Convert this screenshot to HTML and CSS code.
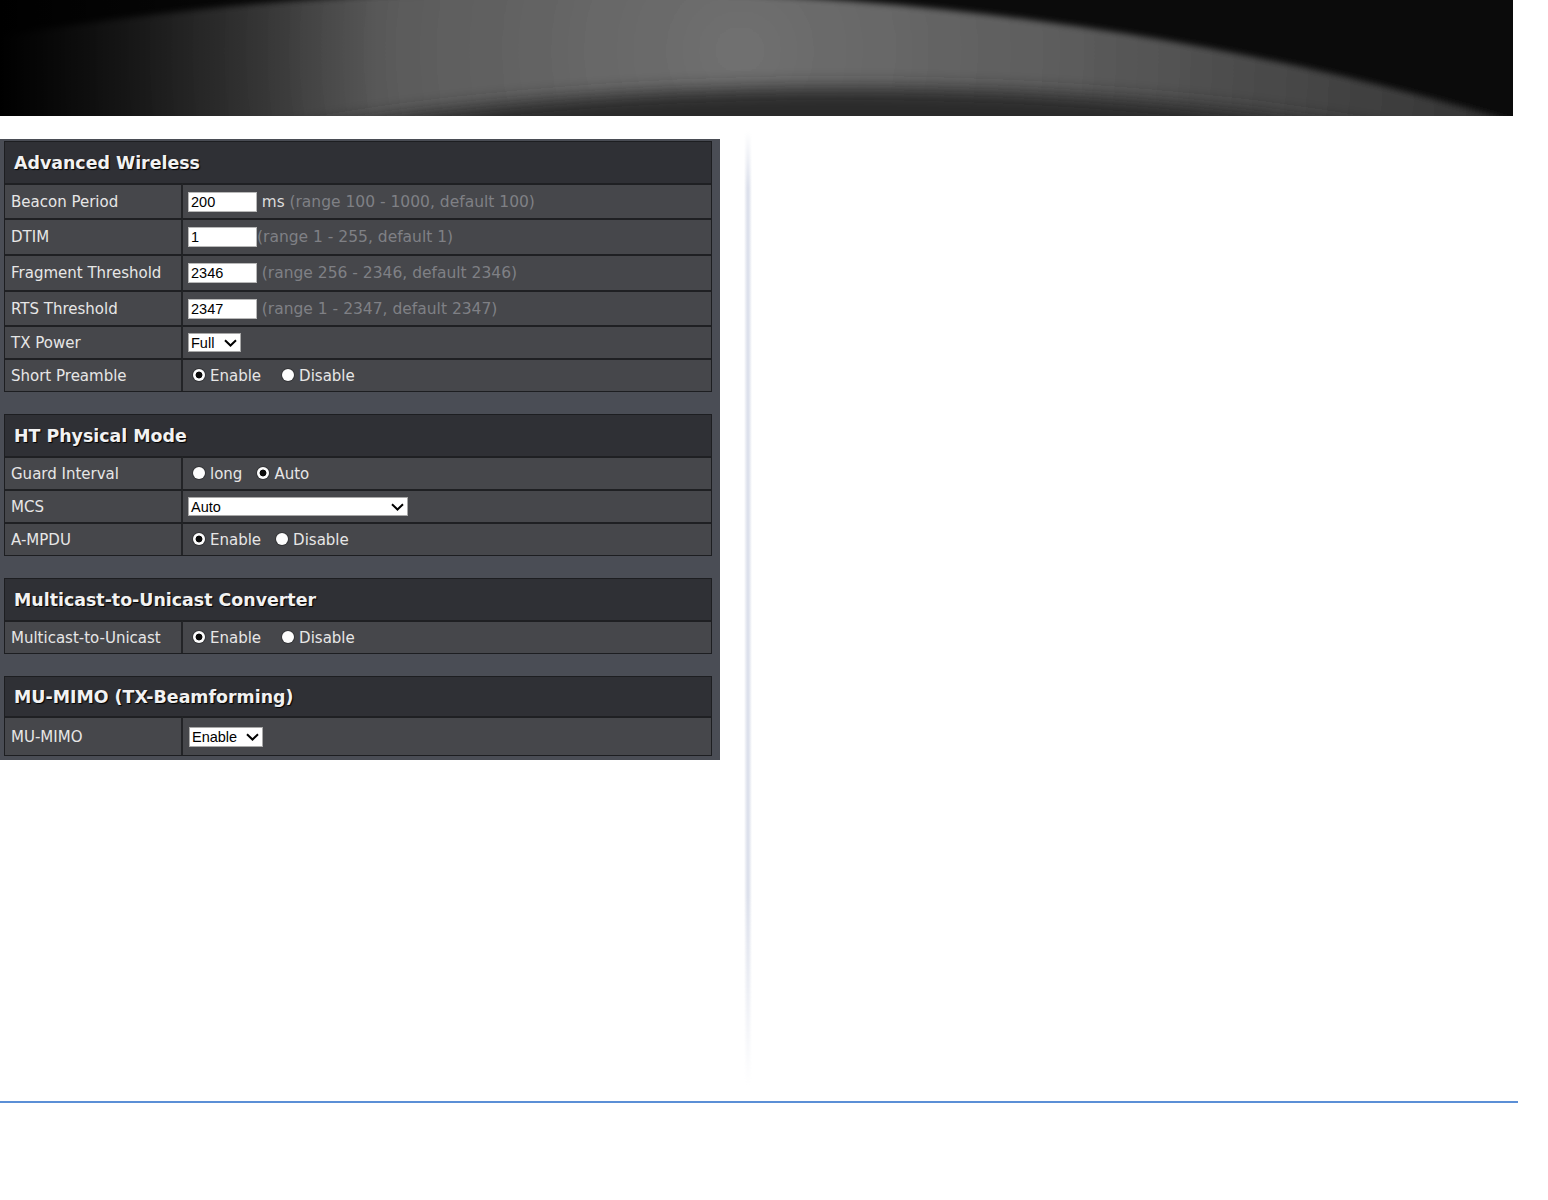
FILE: index.html
```html
<!DOCTYPE html>
<html>
<head>
<meta charset="utf-8">
<title>Advanced Wireless</title>
<link rel="stylesheet" href="styles.css">
</head>
<body>
<div class="banner">
  <svg width="1513" height="116" viewBox="0 0 1513 116">
    <defs>
      <radialGradient id="g1" cx="740" cy="50" r="820" gradientUnits="userSpaceOnUse">
        <stop offset="0" stop-color="#707070"/>
        <stop offset="0.4" stop-color="#5c5c5c"/>
        <stop offset="1" stop-color="#2e2e2e"/>
      </radialGradient>
      <linearGradient id="lf" x1="0" y1="0" x2="1" y2="0">
        <stop offset="0" stop-color="#000" stop-opacity="1"/>
        <stop offset="0.25" stop-color="#000" stop-opacity="0"/>
      </linearGradient>
      <filter id="b1" x="-5%" y="-5%" width="110%" height="110%"><feGaussianBlur stdDeviation="3"/></filter>
      <filter id="b2" x="-20%" y="-20%" width="140%" height="140%"><feGaussianBlur stdDeviation="9"/></filter>
    </defs>
    <rect width="1513" height="116" fill="#0b0b0b"/>
    <ellipse cx="571" cy="990" rx="1900" ry="1000" fill="url(#g1)" filter="url(#b1)"/>
    <ellipse cx="840" cy="388" rx="1050" ry="300" fill="#2a2a2a" filter="url(#b2)"/>
    <rect width="1513" height="116" fill="url(#lf)"/>
  </svg>
</div>
<div class="main">
  <div class="panel">
    <table class="tbl">
      <colgroup><col class="c1"><col class="c2"></colgroup>
      <tr class="head"><th colspan="2">Advanced Wireless</th></tr>
      <tr class="r35"><td class="lbl">Beacon Period</td><td class="val"><input class="txt" type="text" value="200"> <span class="unit">ms</span> <span class="hint">(range 100 - 1000, default 100)</span></td></tr>
      <tr class="r36"><td class="lbl">DTIM</td><td class="val"><input class="txt" type="text" value="1"><span class="hint">(range 1 - 255, default 1)</span></td></tr>
      <tr class="r36"><td class="lbl">Fragment Threshold</td><td class="val"><input class="txt" type="text" value="2346"> <span class="hint">(range 256 - 2346, default 2346)</span></td></tr>
      <tr class="r35"><td class="lbl">RTS Threshold</td><td class="val"><input class="txt" type="text" value="2347"> <span class="hint">(range 1 - 2347, default 2347)</span></td></tr>
      <tr><td class="lbl">TX Power</td><td class="val"><span class="select s-full"><span>Full</span><svg width="13" height="8" viewBox="0 0 13 8"><path d="M1 1.2 L6.5 6.5 L12 1.2" fill="none" stroke="#000" stroke-width="2"/></svg></span></td></tr>
      <tr><td class="lbl">Short Preamble</td><td class="val"><input class="radio" type="radio" name="sp" checked><span class="opt">Enable</span><input class="radio gap-wide" type="radio" name="sp"><span class="opt">Disable</span></td></tr>
    </table>

    <table class="tbl">
      <colgroup><col class="c1"><col class="c2"></colgroup>
      <tr class="head"><th colspan="2">HT Physical Mode</th></tr>
      <tr><td class="lbl">Guard Interval</td><td class="val"><input class="radio" type="radio" name="gi"><span class="opt">long</span><input class="radio gap" type="radio" name="gi" checked><span class="opt">Auto</span></td></tr>
      <tr><td class="lbl">MCS</td><td class="val"><span class="select s-mcs"><span>Auto</span><svg width="13" height="8" viewBox="0 0 13 8"><path d="M1 1.2 L6.5 6.5 L12 1.2" fill="none" stroke="#000" stroke-width="2"/></svg></span></td></tr>
      <tr><td class="lbl">A-MPDU</td><td class="val"><input class="radio" type="radio" name="am" checked><span class="opt">Enable</span><input class="radio gap" type="radio" name="am"><span class="opt">Disable</span></td></tr>
    </table>

    <table class="tbl">
      <colgroup><col class="c1"><col class="c2"></colgroup>
      <tr class="head"><th colspan="2">Multicast-to-Unicast Converter</th></tr>
      <tr><td class="lbl">Multicast-to-Unicast</td><td class="val"><input class="radio" type="radio" name="mu" checked><span class="opt">Enable</span><input class="radio gap-wide" type="radio" name="mu"><span class="opt">Disable</span></td></tr>
    </table>

    <table class="tbl">
      <colgroup><col class="c1"><col class="c2"></colgroup>
      <tr class="head short"><th colspan="2">MU-MIMO (TX-Beamforming)</th></tr>
      <tr class="big"><td class="lbl">MU-MIMO</td><td class="val"><span class="select s-mimo"><span>Enable</span><svg width="13" height="8" viewBox="0 0 13 8"><path d="M1 1.2 L6.5 6.5 L12 1.2" fill="none" stroke="#000" stroke-width="2"/></svg></span></td></tr>
    </table>
  </div>
  <div class="divider"></div>
</div>
<div class="rule"></div>
</body>
</html>
```
FILE: styles.css
```css
body {
  margin: 0;
  background: #ffffff;
  font-family: "DejaVu Sans", Verdana, sans-serif;
}

.banner {
  width: 1513px;
  height: 116px;
  background: #0b0b0b;
  overflow: hidden;
}

.banner svg {
  display: block;
}

.main {
  display: flex;
  height: 985px;
}

.panel {
  width: 720px;
  box-sizing: border-box;
  align-self: flex-start;
  margin-top: 23px;
  padding: 2px 8px 4px 4px;
  background: #4a4d55;
  display: flex;
  flex-direction: column;
  gap: 22px;
}

.tbl {
  width: 100%;
  table-layout: fixed;
  border-collapse: separate;
  border-spacing: 0;
  background: #46474b;
  border: 1px solid #1d1e21;
}

.tbl col.c1 {
  width: 178px;
}

.tbl th,
.tbl td {
  box-sizing: border-box;
}

.tbl th {
  height: 41px;
  padding: 0 0 0 9px;
  background: #2f3035;
  color: #f2f2f2;
  text-align: left;
  font-size: 17.4px;
  font-weight: bold;
  text-shadow: 1px 1px 1px #000;
}

.tbl tr.short th {
  height: 39px;
}

.tbl td {
  height: 33px;
  padding: 0;
  border-top: 2px solid #1f2023;
  color: #e6e6e6;
  font-size: 15px;
  white-space: nowrap;
}

.tbl tr.r35 td {
  height: 35px;
}

.tbl tr.r36 td {
  height: 36px;
}

.tbl tr.big td {
  height: 39px;
}

.tbl td.lbl {
  padding-left: 6px;
  border-right: 2px solid #232427;
}

.tbl td.val {
  padding-left: 5px;
}

.txt {
  width: 69px;
  height: 20px;
  box-sizing: border-box;
  margin: 0;
  padding: 0 2px;
  border: 1px solid #b8b8b8;
  background: #fff;
  color: #000;
  font-family: "Liberation Sans", Arial, sans-serif;
  font-size: 14.5px;
  vertical-align: middle;
}

.unit {
  color: #dcdcdc;
  vertical-align: middle;
  font-size: 15.3px;
}

.hint {
  color: #7f8085;
  vertical-align: middle;
  font-size: 15.5px;
}

.radio {
  -webkit-appearance: none;
  appearance: none;
  width: 12px;
  height: 12px;
  margin: 0 5px 0 5px;
  border-radius: 50%;
  background: #fdfdfd;
  box-shadow: 0 0 0 1px rgba(0, 0, 0, 0.25);
  vertical-align: middle;
  position: relative;
  top: -1px;
}

.radio:checked {
  background: radial-gradient(circle, #0a0a0a 0, #0a0a0a 3px, #fdfdfd 3.8px);
}

.radio.gap {
  margin-left: 15px;
}

.radio.gap-wide {
  margin-left: 21px;
}

.opt {
  vertical-align: middle;
  color: #e6e6e6;
}

.select {
  display: inline-flex;
  align-items: center;
  justify-content: space-between;
  box-sizing: border-box;
  height: 19px;
  padding: 0 3px 0 2px;
  background: #fff;
  border: 1px solid #a8a8a8;
  color: #000;
  font-family: "Liberation Sans", Arial, sans-serif;
  font-size: 14.5px;
  vertical-align: middle;
}

.select svg {
  display: block;
}

.s-full {
  width: 53px;
}

.s-mcs {
  width: 220px;
}

.s-mimo {
  width: 74px;
  height: 20px;
  margin-left: 1px;
}

.divider {
  width: 8px;
  height: 955px;
  margin: 15px 0 0 24px;
  background: linear-gradient(to right, rgba(226, 229, 238, 0), #dde1ec 40%, #dde1ec 60%, rgba(226, 229, 238, 0));
  -webkit-mask-image: linear-gradient(to bottom, transparent 0, #000 6%, #000 80%, transparent 100%);
  mask-image: linear-gradient(to bottom, transparent 0, #000 6%, #000 80%, transparent 100%);
}

.rule {
  width: 1518px;
  height: 2px;
  background: #5b8fd6;
}
```
